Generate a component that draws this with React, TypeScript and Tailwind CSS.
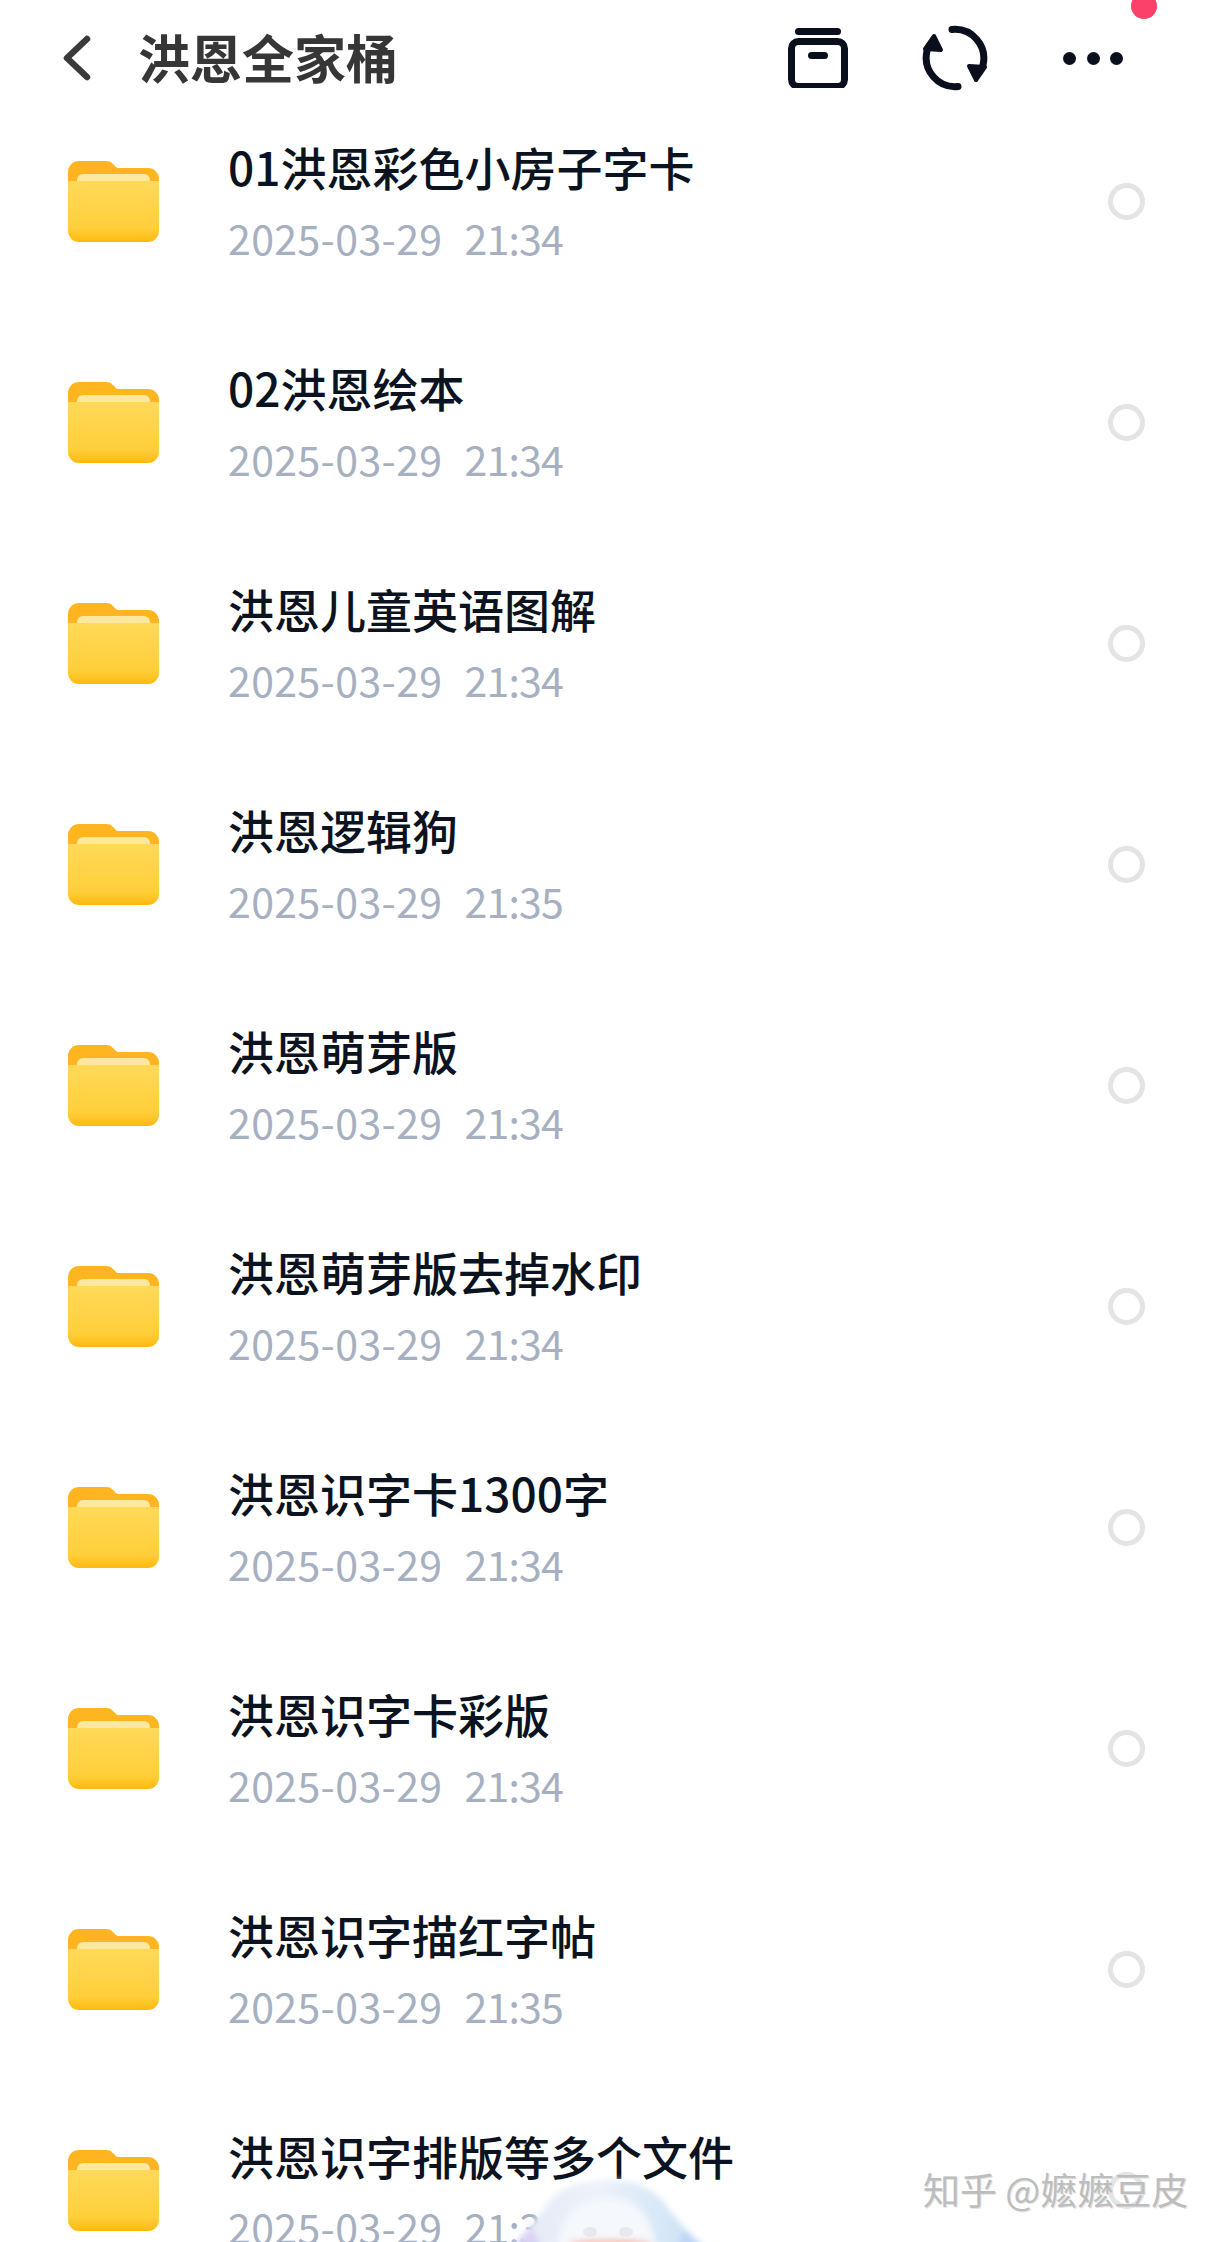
interface FileRow {
  name: string
  time: string
}

const files: FileRow[] = [
  { name: "01洪恩彩色小房子字卡", time: "21:34" },
  { name: "02洪恩绘本", time: "21:34" },
  { name: "洪恩儿童英语图解", time: "21:34" },
  { name: "洪恩逻辑狗", time: "21:35" },
  { name: "洪恩萌芽版", time: "21:34" },
  { name: "洪恩萌芽版去掉水印", time: "21:34" },
  { name: "洪恩识字卡1300字", time: "21:34" },
  { name: "洪恩识字卡彩版", time: "21:34" },
  { name: "洪恩识字描红字帖", time: "21:35" },
  { name: "洪恩识字排版等多个文件", time: "21:34" },
]

function FolderIcon() {
  return (
    <svg width="91" height="81" viewBox="0 0 91 81" className="shrink-0">
      <defs>
        <linearGradient id="folderFront" x1="0" y1="0" x2="0" y2="1">
          <stop offset="0" stopColor="#ffd958" />
          <stop offset="0.78" stopColor="#ffcf3a" />
          <stop offset="1" stopColor="#ffb910" />
        </linearGradient>
      </defs>
      <path d="M0 11a11 11 0 0 1 11-11h28a8 8 0 0 1 6 3l3 3a3 3 0 0 0 3 1h29a11 11 0 0 1 11 11v12H0z" fill="#ffb51f" />
      <path d="M9 19a6 6 0 0 1 6-6h61a6 6 0 0 1 6 6v3H9z" fill="#fde8a0" />
      <path d="M0 20h91v50a11 11 0 0 1-11 11H11A11 11 0 0 1 0 70z" fill="url(#folderFront)" />
    </svg>
  )
}

function BackIcon() {
  return (
    <svg width="30" height="48" viewBox="0 0 30 48" className="shrink-0">
      <path d="M26 5 6 24l20 19" fill="none" stroke="#3a3a3a" strokeWidth="6.5" strokeLinecap="round" strokeLinejoin="round" />
    </svg>
  )
}

function ArchiveIcon() {
  return (
    <svg width="60" height="60" viewBox="0 0 60 60" className="shrink-0">
      <rect x="7" y="0" width="46" height="7" rx="3.5" fill="#0a0f1e" />
      <rect x="3.5" y="13.5" width="53" height="45" rx="7" fill="none" stroke="#0a0f1e" strokeWidth="7" />
      <rect x="20" y="24" width="20" height="7" rx="3.5" fill="#0a0f1e" />
    </svg>
  )
}

function SyncIcon() {
  return (
    <svg width="70" height="70" viewBox="-35 -35 70 70" className="shrink-0">
      {[0, 180].map((deg) => (
        <g key={deg} transform={`rotate(${deg})`}>
          <path d="M-3-28.5A29 29 0 0 1 28 7" fill="none" stroke="#0a0f1e" strokeWidth="7" strokeLinecap="round" />
          <path d="M14 8 30 9 21 22z" fill="#0a0f1e" stroke="#0a0f1e" strokeWidth="4" strokeLinejoin="round" />
        </g>
      ))}
    </svg>
  )
}

function MoreIcon() {
  return (
    <div className="flex w-[60px] shrink-0 items-center justify-between">
      <div className="h-[13px] w-[13px] rounded-full bg-[#0a0f1e]" />
      <div className="h-[13px] w-[13px] rounded-full bg-[#0a0f1e]" />
      <div className="h-[13px] w-[13px] rounded-full bg-[#0a0f1e]" />
    </div>
  )
}

function Row({ file }: { file: FileRow }) {
  return (
    <div className="flex h-[221px] shrink-0 items-center pl-[68px] pr-[71px]">
      <FolderIcon />
      <div className="min-w-0 flex-1 pb-[6px] pl-[69px]">
        <div className="text-[46px] font-medium leading-[60px] text-[#0b1220]">{file.name}</div>
        <div className="mt-[16px] flex text-[41px] leading-[50px] text-[#a6b0c0]">
          <span className="tracking-[0.4px]">2025-03-29</span>
          <span className="ml-[22px] tracking-[-0.8px]">{file.time}</span>
        </div>
      </div>
      <div className="h-[37px] w-[37px] shrink-0 rounded-full border-[5px] border-[#e4e4e4]" />
    </div>
  )
}

function Mascot() {
  return (
    <svg width="260" height="72" viewBox="0 0 260 72" className="absolute left-[480px] top-[2170px]">
      <defs>
        <filter id="soft" x="-20%" y="-20%" width="140%" height="140%">
          <feGaussianBlur stdDeviation="3" />
        </filter>
        <linearGradient id="dome" x1="0" y1="0" x2="1" y2="0">
          <stop offset="0" stopColor="#e2e8f5" />
          <stop offset="0.45" stopColor="#edf3fa" />
          <stop offset="1" stopColor="#c9e0f5" />
        </linearGradient>
      </defs>
      <g filter="url(#soft)">
        <path d="M32 78C44 60 58 48 66 36 78 18 100 10 128 10c30 0 48 10 60 28 8 12 22 24 34 40z" fill="url(#dome)" />
        <path d="M78 78C80 50 92 30 128 28c30 0 44 18 48 50z" fill="#f5f8fc" />
        <path d="M30 78 52 58 62 78z" fill="#d9d2f3" />
        <path d="M198 78 204 60 226 78z" fill="#bcd6f5" />
        <ellipse cx="130" cy="74" rx="42" ry="4" fill="#f4b4a8" />
      </g>
      <ellipse cx="110" cy="62" rx="7" ry="5" fill="#e7e9ee" />
      <ellipse cx="146" cy="62" rx="7" ry="5" fill="#e7e9ee" />
    </svg>
  )
}

export default function App() {
  return (
    <div className="relative flex h-[2242px] w-[1216px] flex-col overflow-hidden bg-white font-['Noto_Sans_CJK_SC','Noto_Sans',sans-serif]">
      <div className="absolute left-[1131px] top-[-7px] h-[26px] w-[26px] rounded-full bg-[#fb4069]" />

      <div className="flex h-[91px] shrink-0 items-center pl-[61px] pr-[93px] pt-[25px]">
        <BackIcon />
        <div className="ml-[47px] flex-1 pb-[2px] text-[52px] font-bold leading-[60px] text-[#363636]">洪恩全家桶</div>
        <ArchiveIcon />
        <div className="ml-[72px]">
          <SyncIcon />
        </div>
        <div className="ml-[73px]">
          <MoreIcon />
        </div>
      </div>

      {files.map((file) => (
        <Row key={file.name} file={file} />
      ))}

      <Mascot />
      <div className="absolute left-[923px] top-[2164px] whitespace-pre text-[37px] leading-[50px] text-[#bdbdbd] [text-shadow:1px_1px_0_#e4e4e4]">
        知乎 @嬷嬷豆皮
      </div>
    </div>
  )
}
